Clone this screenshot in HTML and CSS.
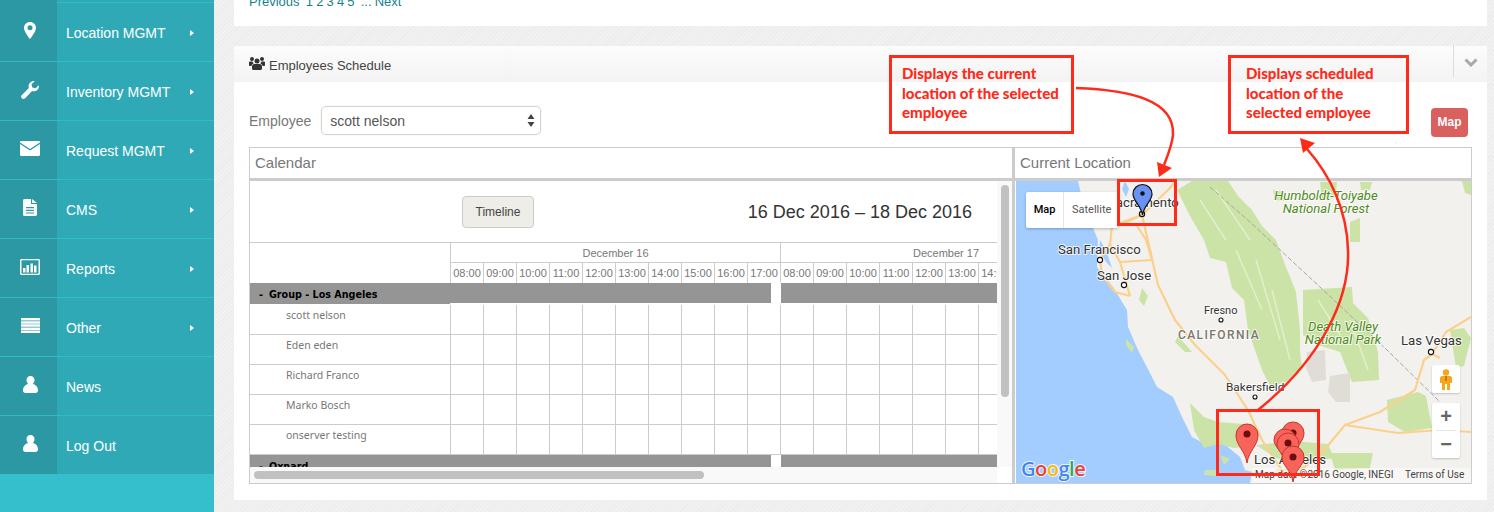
FILE: index.html
```html
<!DOCTYPE html>
<html lang="en">
<head>
<meta charset="utf-8">
<title>Employees Schedule</title>
<link rel="stylesheet" href="styles.css">
</head>
<body>
<aside class="sidebar">
  <div class="nav-top"><span class="nav-icon"></span></div>
  <a class="nav-item"><span class="nav-icon"><svg width="12" height="17" viewBox="0 0 12 17"><path class="w" fill-rule="evenodd" d="M6 0C2.7 0 0 2.6 0 5.9 0 9 3.6 14 6 17c2.400-3 6-8 6-11.100C12 2.600 9.300 0 6 0zm0 8.300A2.500 2.500 0 1 1 6 3.300a2.500 2.500 0 0 1 0 5z"/></svg></span><span class="nav-label">Location MGMT</span><i class="caret"></i></a>
  <a class="nav-item"><span class="nav-icon"><svg width="18" height="18" viewBox="0 0 18 18"><path class="w" d="M17.800 4.200c.3 1.800-.2 3.500-1.500 4.800-1.500 1.400-3.500 1.700-5.300 1L4.200 17.200c-1 1-2.500 1-3.400.1-1-1-.9-2.500.1-3.400L7.900 7C7.200 5.200 7.600 3.100 9 1.700 10.300.4 12.100-.2 13.800.1L10.600 3.300l.7 3.300 3.300.7z"/></svg></span><span class="nav-label">Inventory MGMT</span><i class="caret"></i></a>
  <a class="nav-item"><span class="nav-icon"><svg width="20" height="15" viewBox="0 0 20 15"><path class="w" d="M0 1.200C0 .5.500 0 1.200 0h17.600c.7 0 1.200.5 1.200 1.200v.3l-10 6.600L0 1.500zM0 3l10 6.500L20 3v10.800c0 .7-.5 1.200-1.200 1.200H1.200C.5 15 0 14.500 0 13.800z"/></svg></span><span class="nav-label">Request MGMT</span><i class="caret"></i></a>
  <a class="nav-item"><span class="nav-icon"><svg width="14" height="17" viewBox="0 0 14 17"><path class="w" fill-rule="evenodd" d="M1.500 0H8v5h6v10.500c0 .8-.7 1.500-1.500 1.500h-11C.7 17 0 16.300 0 15.500v-14C0 .7.700 0 1.500 0zM9 0l5 4H9zM3 8v1.200h8V8zm0 2.700v1.200h8v-1.200zm0 2.700v1.200h8v-1.200z"/></svg></span><span class="nav-label">CMS</span><i class="caret"></i></a>
  <a class="nav-item"><span class="nav-icon"><svg width="20" height="16" viewBox="0 0 20 16"><path class="w" fill-rule="evenodd" d="M1.500 0h17C19.300 0 20 .7 20 1.500v13c0 .8-.7 1.500-1.500 1.500h-17C.7 16 0 15.300 0 14.500v-13C0 .7.700 0 1.500 0zm0 1.300v13.400h17V1.300zM3 9h2.500v4.500H3zm3.500-3H9v7.500H6.500zm4-1.500H13v9h-2.500zm3.500 2h2.500v7H14z"/></svg></span><span class="nav-label">Reports</span><i class="caret"></i></a>
  <a class="nav-item"><span class="nav-icon"><svg width="19" height="15" viewBox="0 0 19 15"><path class="w" d="M0 0h19v2.500H0zm0 3.200h19v2.500H0zm0 3.100h19v2.500H0zm0 3.200h19V12H0zm0 3h19V15H0z"/></svg></span><span class="nav-label">Other</span><i class="caret"></i></a>
  <a class="nav-item"><span class="nav-icon"><svg width="15" height="17" viewBox="0 0 15 17"><path class="w" d="M7.500 0a4 4 0 0 1 4 4.300c0 1.500-.7 2.900-1.800 3.600 3.200.6 5.300 3 5.300 6.600 0 1.500-1 2.500-2.500 2.500h-10C1 17 0 16 0 14.500c0-3.600 2.100-6 5.300-6.600-1.100-.7-1.800-2.100-1.800-3.600A4 4 0 0 1 7.500 0z"/></svg></span><span class="nav-label">News</span></a>
  <a class="nav-item"><span class="nav-icon"><svg width="15" height="17" viewBox="0 0 15 17"><path class="w" d="M7.500 0a4 4 0 0 1 4 4.300c0 1.500-.7 2.900-1.800 3.600 3.200.6 5.300 3 5.300 6.600 0 1.500-1 2.500-2.500 2.500h-10C1 17 0 16 0 14.500c0-3.600 2.100-6 5.300-6.600-1.100-.7-1.800-2.100-1.800-3.600A4 4 0 0 1 7.500 0z"/></svg></span><span class="nav-label">Log Out</span></a>
</aside>

<main class="content">
  <section class="panel pager-panel">
    <div class="pager"><a>Previous</a> &nbsp;<a>1</a> <a>2</a> <a>3</a> <a>4</a> <a>5</a> &nbsp;... <a>Next</a></div>
  </section>

  <section class="panel schedule">
    <header class="panel-head">
      <svg class="users" width="16" height="13" viewBox="0 0 16 13"><path fill="#333" d="M3 0a2 2 0 1 1 0 4 2 2 0 0 1 0-4zm10 0a2 2 0 1 1 0 4 2 2 0 0 1 0-4zM8 1.500a2.500 2.500 0 1 1 0 5 2.500 2.500 0 0 1 0-5zM0 5.500C0 4.800.6 4.500 1.300 4.500h2.200c.2.800.6 1.500 1.200 2C3.400 7 2.600 8 2.500 9H.8C.3 9 0 8.700 0 8.200zm16 0c0-.7-.6-1-1.300-1h-2.200c-.2.800-.6 1.500-1.200 2 1.300.5 2.100 1.500 2.200 2.500h1.700c.5 0 .8-.3.800-.8zM5.500 7h5c1.500 0 2.500 1 2.500 2.500v2C13 12.400 12.400 13 11.500 13h-7C3.600 13 3 12.400 3 11.500v-2C3 8 4 7 5.500 7z"/></svg>
      <h2 class="panel-title">Employees Schedule</h2>
      <span class="head-tool"><svg width="14" height="9" viewBox="0 0 14 9"><path d="M1.500 1.500 7 7l5.500-5.500" fill="none" stroke="#a9a9a9" stroke-width="3"/></svg></span>
    </header>
    <div class="panel-body">
      <div class="filter-row">
        <label class="filter-label">Employee</label>
        <div class="select">scott nelson<svg width="8" height="13" viewBox="0 0 8 13"><path fill="#444" d="M4 0l3.500 5h-7zm0 13L.5 8h7z"/></svg></div>
        <a class="map-btn">Map</a>
      </div>

      <div class="sched-table">
        <div class="col-cal">
          <div class="col-head">Calendar</div>
          <div class="cal-body">
            <div class="cal-scroll">
              <div class="cal-toolbar">
                <button class="timeline-btn">Timeline</button>
                <div class="cal-range">16 Dec 2016 – 18 Dec 2016</div>
              </div>
              <div class="tl-head">
                <div class="tl-corner"></div>
                <div class="tl-times">
                  <div class="tl-days"><span class="day d1">December 16</span><span class="day d2">December 17</span></div>
                  <div class="tl-hours">
                    <span>08:00</span><span>09:00</span><span>10:00</span><span>11:00</span><span>12:00</span><span>13:00</span><span>14:00</span><span>15:00</span><span>16:00</span><span>17:00</span><span>08:00</span><span>09:00</span><span>10:00</span><span>11:00</span><span>12:00</span><span>13:00</span><span>14:00</span>
                  </div>
                </div>
              </div>
              <div class="tl-group"><div class="tl-group-name"><b>-</b>Group - Los Angeles</div><div class="tl-group-bar"></div></div>
              <div class="tl-row"><div class="tl-name">scott nelson</div><div class="tl-grid"></div></div>
              <div class="tl-row"><div class="tl-name">Eden eden</div><div class="tl-grid"></div></div>
              <div class="tl-row"><div class="tl-name">Richard Franco</div><div class="tl-grid"></div></div>
              <div class="tl-row"><div class="tl-name">Marko Bosch</div><div class="tl-grid"></div></div>
              <div class="tl-row"><div class="tl-name">onserver testing</div><div class="tl-grid"></div></div>
              <div class="tl-group"><div class="tl-group-name"><b>-</b>Oxnard</div><div class="tl-group-bar"></div></div>
            </div>
            <div class="vbar"><i></i></div>
            <div class="hbar"><i></i></div>
            <div class="bar-corner"></div>
          </div>
        </div>

        <div class="col-map">
          <div class="col-head">Current Location</div>
          <div class="map-wrap">
            <svg class="map" viewBox="1016 181 455 302" width="455" height="302">
              <rect x="1016" y="181" width="455" height="302" fill="#a3ccff"/>
              <path fill="#f2f1ee" d="M1078 181 1085 210 1093 228 1098 240 1097 267 1104 276 1113 287 1127 310 1128 327 1138 350 1150 373 1157 387 1173 397 1182 417 1192 437 1207 445 1223 443 1240 457 1245 470 1252 472 1250 483 1471 483 1471 181z"/>
              <path fill="#a3ccff" d="M1100 240 1106 250 1112 268 1106 262 1099 250zM1125 181l4 8-3 8-4-8zM1208 184l5 12-2 8-5-10zM1252 243l8-1 2 5-7 2z"/>
              <path class="park" d="M1177 190 1192 181 1228 181 1238 196 1252 210 1262 226 1276 240 1284 262 1296 292 1300 330 1300 352 1302 368 1286 382 1270 386 1262 370 1248 330 1244 300 1232 288 1226 262 1210 258 1204 240 1190 216z"/>
              <path class="park" d="M1303 290 1352 287 1353 303 1368 318 1378 352 1379 380 1352 382 1340 352 1318 345 1303 335z"/>
              <path class="park" d="M1320 182 1337 182 1335 198 1322 200zM1350 222 1360 218 1360 242 1350 242zM1360 182 1372 182 1370 190 1361 190zM1273 190 1286 192 1284 201 1275 200zM1462 181 1471 181 1471 195 1465 193z"/>
              <path class="park" d="M1387 400 1418 392 1426 396 1432 428 1405 432 1388 422zM1142 288l6 8-4 10-5-6zM1126 339l8 8-2 6-6-8zM1190 403l14 14 14 5 26 2 8 22-18 2-16-4-14 4-10-18zM1256 445l36-4 36 3 6 14-38 6-20-6zM1330 453 1373 453 1370 468 1335 470zM1450 330l14-2 7 10-7 28-8 2zM1178 336 1192 352 1185 352 1175 342zM1220 455l10 4-6 6zM1205 470l14 0-3 6-12-1z"/>
              <path class="streak" d="M1200 200 1226 240M1216 190 1250 240M1236 250 1262 310M1256 260 1280 340M1272 290 1290 360M1318 300 1340 335M1350 320 1368 370"/>
              <path fill="#dfddd6" d="M1307 352 1325 350 1326 380 1312 382 1306 368zM1330 376 1350 373 1350 402 1336 402 1328 392z"/>
              <path fill="none" stroke="#a8a7a4" stroke-width="1" stroke-dasharray="5 2" d="M1210 187 1250 222 1320 287 1387 350 1440 402"/>
              <g class="road">
                <path d="M1118 226 1142 215 1168 190 1176 181M1142 215 1150 250 1158 285 1175 320 1195 345 1225 375 1248 410 1262 440 1285 475"/>
                <path d="M1142 215 1112 226 1110 244 1100 260 1102 275 1115 292 1130 296M1110 244 1120 262 1152 260 1146 240 1136 224M1120 262 1130 296M1152 260 1150 250"/>
                <path d="M1276 470 1300 470 1320 455 1345 425 1380 412 1415 390 1424 360 1432 354 1440 358M1345 425 1398 433 1440 430 1471 432M1432 354 1446 332 1471 317"/>
              </g>
              <g class="cities">
                <circle cx="1100" cy="260" r="2.600"/><circle cx="1124" cy="285" r="2.600"/><circle cx="1221" cy="320" r="2"/><circle cx="1255" cy="397" r="2"/><circle cx="1431" cy="352" r="2.600"/>
              </g>
              <g class="lbl">
                <text x="1058" y="254" class="l13">San Francisco</text>
                <text x="1097" y="280" class="l13">San Jose</text>
                <text x="1108" y="207" class="l13">Sacramento</text>
                <text x="1204" y="314" class="l11">Fresno</text>
                <text x="1226" y="391" class="l12">Bakersfield</text>
                <text x="1401" y="345" class="l13">Las Vegas</text>
                <text x="1254" y="464" class="l13">Los Angeles</text>
                <text x="1178" y="339" class="state">CALIFORNIA</text>
                <text x="1326" y="200" class="park-l">Humboldt-Toiyabe</text>
                <text x="1326" y="213" class="park-l">National Forest</text>
                <text x="1343" y="331" class="park-l">Death Valley</text>
                <text x="1343" y="344" class="park-l">National Park</text>
              </g>
              <rect x="1252" y="468" width="219" height="15" fill="#fff" fill-opacity=".45"/>
              <text x="1255" y="478" class="attr">Map data ©2016 Google, INEGI</text>
              <text x="1405" y="478" class="attr">Terms of Use</text>
              <text x="1021" y="476" class="glogo"><tspan fill="#4285f4">G</tspan><tspan fill="#ea4335">o</tspan><tspan fill="#fbbc05">o</tspan><tspan fill="#4285f4">g</tspan><tspan fill="#34a853">l</tspan><tspan fill="#ea4335">e</tspan></text>
              <g class="pin">
                <path d="M1247 463C1245 450 1236 446 1236 435a11 11 0 0 1 22 0C1258 446 1249 450 1247 463z"/><circle class="dot" cx="1247" cy="434" r="3.500"/>
                <path d="M1293 459C1291 446 1282 442 1282 433a11 11 0 0 1 22 0C1304 442 1295 446 1293 459z"/><circle class="dot" cx="1293" cy="433" r="3.500"/>
                <path d="M1285 464C1283 451 1274 447 1274 440a11 11 0 0 1 22 0C1296 447 1287 451 1285 464z"/><circle class="dot" cx="1285" cy="438" r="3.500"/>
                <path d="M1288 468C1286 455 1277 452 1277 444a11 11 0 0 1 22 0C1299 452 1290 455 1288 468z"/><circle class="dot" cx="1288" cy="443" r="3.500"/>
                <path d="M1293 482C1291 469 1282 466 1282 457a11 11 0 0 1 22 0C1304 466 1295 469 1293 482z"/><circle class="dot" cx="1293" cy="457" r="3.500"/>
              </g>
              <circle cx="1142" cy="214" r="2.600" fill="none" stroke="#111" stroke-width="1.200"/>
              <path d="M1142.500 215C1141 205 1133 201 1133 194a9.500 9.500 0 0 1 19 0C1152 201 1144 205 1142.500 215z" fill="#6a92f2" stroke="#111" stroke-width="1.200"/>
              <circle cx="1142.500" cy="193.500" r="2.200" fill="#111"/>
            </svg>
            <div class="map-type"><span class="mt-map">Map</span><span class="mt-sat">Satellite</span></div>
            <div class="pegman"><svg width="14" height="21" viewBox="0 0 14 21"><circle cx="7" cy="3.500" r="3.200" fill="#f2a81d"/><path fill="#f2a81d" d="M3 7h8c1 0 2 1 2 2v5h-2v7H8v-6H6v6H3v-7H1V9c0-1 1-2 2-2z"/><path fill="#d8541c" d="M6.300 7h1.400v5H6.300z"/></svg></div>
            <div class="zoom-ctl"><span class="z-btn">+</span><span class="z-btn z-minus">−</span></div>
          </div>
        </div>
      </div>
    </div>
  </section>
</main>

<svg class="annot-lines" width="1494" height="512" viewBox="0 0 1494 512">
  <rect x="1118.500" y="180.500" width="57" height="44" class="a-rect"/>
  <rect x="1217.500" y="410.500" width="101" height="64" class="a-rect"/>
  <path class="a-line" d="M1076 88C1130 90 1175 100 1173 135 1172 145 1168 155 1164 165"/>
  <path class="a-head" d="M1159 177 1157 162 1172 168z"/>
  <path class="a-line" d="M1258 410C1320 360 1350 300 1348 250 1347 210 1330 175 1307 149"/>
  <path class="a-head" d="M1300 138 1303 153 1315 143z"/>
</svg>
<div class="callout c1">Displays the current location of the selected employee</div>
<div class="callout c2">Displays scheduled location of the selected employee</div>
</body>
</html>
```
FILE: styles.css
```css
* { box-sizing: border-box; }
html, body { margin: 0; height: 512px; overflow: hidden; }
body {
  display: flex;
  position: relative;
  font-family: "Liberation Sans", Arial, sans-serif;
  background: repeating-linear-gradient(135deg, #f1f1f1 0 2px, #ececec 2px 3px);
  color: #555;
}
h2 { margin: 0; font-weight: normal; }
a { color: inherit; }
.w { fill: #fff; }

/* sidebar */
.sidebar { width: 214px; flex: none; height: 512px; background: #35bfcc; }
.nav-top { height: 2px; background: #30a9b7; display: flex; }
.nav-item {
  display: flex;
  align-items: center;
  height: 59px;
  border-top: 1px solid #2fbcc9;
  background: #30a9b7;
  color: #fff;
  font-size: 14px;
}
.nav-icon {
  width: 57px;
  align-self: stretch;
  display: flex;
  align-items: center;
  justify-content: center;
  background: #2b98a4;
  padding: 0 0 3px 3px;
}
.nav-label { margin-left: 9px; padding-top: 2px; }
.caret {
  margin-left: auto;
  margin-right: 20px;
  margin-top: 2px;
  border-left: 4px solid #fff;
  border-top: 3.500px solid transparent;
  border-bottom: 3.500px solid transparent;
}

/* content */
.content { width: 1273px; padding-left: 20px; flex: none; }
.panel { width: 1253px; background: #fff; }
.pager-panel { height: 26px; margin-bottom: 20px; padding-left: 15px; overflow: hidden; }
.pager { margin-top: -6px; font-size: 13px; line-height: 16px; color: #177f8c; word-spacing: -.5px; }
.schedule { height: 454px; }
.panel-head {
  height: 36px;
  display: flex;
  align-items: center;
  padding-left: 15px;
  background: linear-gradient(#fcfcfc, #f3f3f3);
}
.users { margin-top: -1px; }
.panel-title { margin-left: 4px; padding-top: 2px; font-size: 13px; color: #444; }
.head-tool {
  margin-left: auto;
  width: 34px;
  height: 32px;
  margin-top: -6px;
  border-left: 1px solid #dcdcdc;
  display: flex;
  align-items: center;
  justify-content: center;
  padding-top: 3px;
}
.panel-body { padding: 24px 15px 0; }

.filter-row { display: flex; height: 29px; margin-bottom: 12px; }
.filter-label { font-size: 14px; line-height: 31px; color: #777; }
.select {
  width: 220px;
  height: 29px;
  margin-left: 10px;
  padding: 0 5px 0 8px;
  display: flex;
  align-items: center;
  justify-content: space-between;
  border: 1px solid #d4d4d4;
  border-radius: 5px;
  font-size: 14px;
  color: #555;
  box-shadow: 0 0 2px #e6e6e6;
}
.map-btn {
  margin: 2px 4px 0 auto;
  width: 37px;
  height: 29px;
  border-radius: 4px;
  background: #d9605f;
  color: #fff;
  font-size: 12px;
  font-weight: bold;
  line-height: 28px;
  text-align: center;
}

.sched-table {
  display: flex;
  width: 1223px;
  height: 337px;
  border: 1px solid #ccc;
  border-bottom-width: 1px;
}
.col-cal { width: 762px; flex: none; }
.col-map { flex: 1; border-left: 3px solid #ccc; min-width: 0; }
.col-head {
  height: 33px;
  padding-left: 5px;
  border-bottom: 3px solid #ccc;
  font-size: 15px;
  line-height: 30px;
  color: #777;
}

/* calendar */
.cal-body {
  display: grid;
  grid-template-columns: 747px 15px;
  grid-template-rows: 286px 16px;
  height: 302px;
}
.cal-scroll { overflow: hidden; }
.vbar { background: #f9f9f9; padding: 4px 0 0 4px; }
.vbar i { display: block; width: 8px; height: 212px; border-radius: 4px; background: #c1c1c1; }
.hbar { background: #f9f9f9; padding: 4px 0 0 4px; }
.hbar i { display: block; width: 450px; height: 8px; border-radius: 4px; background: #c1c1c1; }
.bar-corner { background: #fff; }

.cal-toolbar { height: 61px; display: flex; align-items: center; padding: 0 25px 0 212px; }
.timeline-btn {
  width: 72px;
  height: 32px;
  border: 1px solid #ccc;
  border-radius: 4px;
  background: #efede8;
  color: #444;
  font: 12px "Liberation Sans", Arial, sans-serif;
}
.cal-range { margin-left: auto; padding-top: 1px; font-size: 18px; color: #333; }

.tl-head { display: flex; height: 41px; border-top: 1px solid #ccc; }
.tl-corner { width: 200px; flex: none; }
.tl-times { flex: 1; min-width: 0; overflow: hidden; }
.tl-days { display: flex; height: 20px; }
.day { flex: none; width: 330px; height: 20px; border-left: 1px solid #ccc; border-bottom: 1px solid #ccc; font-size: 11px; line-height: 20px; text-align: center; color: #777; }
.d2 { width: 217px; padding-right: 0; text-align: left; padding-left: 132px; white-space: nowrap; }
.tl-hours { display: flex; height: 20px; }
.tl-hours span {
  flex: none;
  width: 33px;
  border-left: 1px solid #ccc;
  font-size: 11px;
  line-height: 20px;
  text-align: center;
  color: #777;
  white-space: nowrap;
  overflow: hidden;
}
.tl-group { display: flex; height: 22px; background: #fff; flex-shrink: 0; }
.tl-group-name {
  width: 200px;
  flex: none;
  height: 21px;
  padding-left: 9px;
  background: #969595;
  color: #000;
  font: bold 9.600px/23px "DejaVu Sans", sans-serif;
  white-space: nowrap;
}
.tl-group-name b { display: inline-block; width: 10px; }
.tl-group-bar {
  flex: 1;
  height: 20px;
  background: linear-gradient(to right, #969595 321px, #fff 321px 331px, #969595 331px);
}
.tl-row { display: flex; height: 30px; border-bottom: 1px solid #ccc; }
.tl-name {
  width: 200px;
  flex: none;
  padding-left: 36px;
  font: 10.500px/20px "Noto Sans", sans-serif;
  color: #777;
}
.tl-grid {
  flex: 1;
  background: repeating-linear-gradient(to right, #ccc 0 1px, transparent 1px 33px);
}
.tl-row:first-of-type { height: 29px; }

/* map */
.map-wrap { position: relative; height: 302px; padding-left: 1px; overflow: hidden; }
.map { display: block; }
.park { fill: #cbe3a6; }
.streak { fill: none; stroke: #e2efcd; stroke-width: 1.500; }
.road path { fill: none; stroke: #fcd08c; stroke-width: 2.200; stroke-linejoin: round; }
.cities circle { fill: #fff; stroke: #111; stroke-width: 1.100; }
.lbl text { font-family: Roboto, sans-serif; paint-order: stroke; stroke: #fff; stroke-width: 2px; stroke-opacity: .75; fill: #333; }
.l13 { font-size: 13.200px; }
.l12 { font-size: 11.800px; }
.l11 { font-size: 11px; }
.lbl .state { font-size: 12px; letter-spacing: 1.400px; fill: #7c776b; font-weight: 500; }
.lbl .park-l { font-size: 13.100px; font-style: italic; fill: #4e8a1a; text-anchor: middle; }
.attr { font-family: Roboto, sans-serif; font-size: 10px; fill: #444; }
.glogo { font-family: "Open Sans", sans-serif; font-size: 20px; font-weight: 600; paint-order: stroke; stroke: #fff; stroke-width: 2px; stroke-opacity: .8; letter-spacing: -.5px; }
.pin path { fill: #f9635a; stroke: #c3372e; stroke-width: 1; }
.pin .dot { fill: #6a0f0f; }

.map-type {
  position: absolute;
  left: 11px;
  top: 11px;
  width: 92px;
  height: 36px;
  display: flex;
  background: #fff;
  border-radius: 2px;
  font: 11px/36px Roboto, sans-serif;
  box-shadow: 0 1px 3px rgba(0, 0, 0, .25);
}
.mt-map { width: 38px; text-align: center; color: #000; font-weight: 500; border-right: 1px solid #e6e6e6; }
.mt-sat { flex: 1; padding-left: 8px; color: #565656; white-space: nowrap; }
.pegman {
  position: absolute;
  left: 417px;
  top: 184px;
  width: 28px;
  height: 28px;
  display: flex;
  align-items: center;
  justify-content: center;
  background: #fff;
  border-radius: 2px;
  box-shadow: 0 1px 2px rgba(0, 0, 0, .2);
}
.zoom-ctl {
  position: absolute;
  left: 417px;
  top: 222px;
  width: 28px;
  height: 55px;
  background: #fff;
  border-radius: 2px;
  box-shadow: 0 1px 2px rgba(0, 0, 0, .2);
}
.z-btn {
  display: block;
  height: 27px;
  font: bold 20px/26px "Liberation Sans", sans-serif;
  text-align: center;
  color: #666;
}
.z-minus { border-top: 1px solid #e6e6e6; margin: 0 4px; }

/* annotations */
.annot-lines { position: absolute; left: 0; top: 0; pointer-events: none; }
.a-rect { fill: none; stroke: #ff2a1a; stroke-width: 3; }
.a-line { fill: none; stroke: #ff2a1a; stroke-width: 2.500; }
.a-head { fill: #ff2a1a; }
.callout {
  position: absolute;
  top: 55px;
  height: 79px;
  padding: 6px 0 0 10px;
  border: 3px solid #ff2a1a;
  color: #ff2a1a;
  font: 900 15px/19.500px Lato, sans-serif;
}
.c1 { left: 889px; width: 185px; }
.c2 { left: 1228px; width: 181px; padding-left: 15px; padding-right: 20px; }
```
